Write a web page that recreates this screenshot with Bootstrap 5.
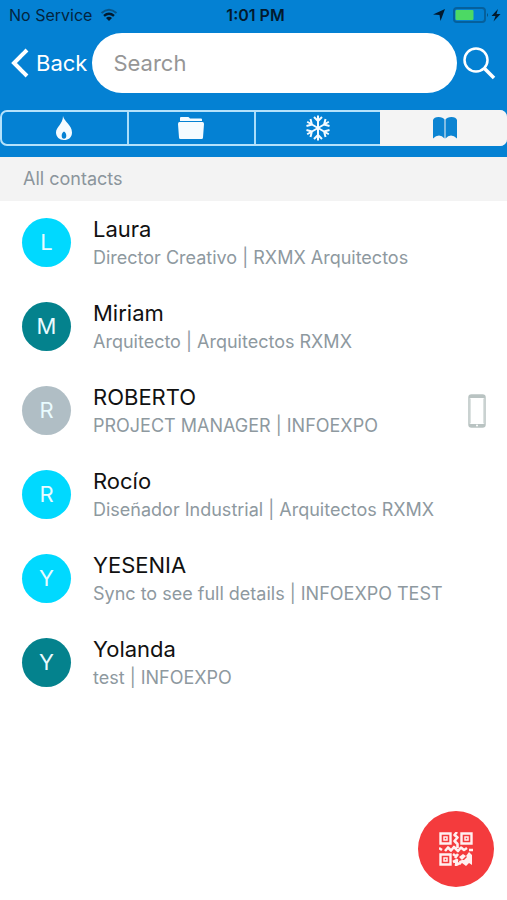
<!DOCTYPE html>
<html lang="en">
<head>
<meta charset="utf-8">
<meta name="viewport" content="width=device-width, initial-scale=1">
<title>Contacts</title>
<link href="https://cdn.jsdelivr.net/npm/bootstrap@5.3.0/dist/css/bootstrap.min.css" rel="stylesheet">
<style>
body { font-family: Inter, "Liberation Sans", sans-serif; background: #fff; }
svg { display: block; flex: none; }
.app-top { background: #0481d3; padding-bottom: 11px; }
.status { height: 30px; padding: 0 5px 0 9px; color: #03253f; font-size: 16px; line-height: 30px; }
.status-time { color: #021a2e; font-weight: 600; }
.nav-line { padding: 3px 11px 0; gap: 5px; }
.back-link { color: #fff; font-size: 22px; gap: 7px; }
.search-box, .search-box:focus { height: 60px; border: 0; border-radius: 30px; padding: 0 21px; font-size: 22px; color: #333; background: #fff; }
.search-box::placeholder { color: #969696; opacity: 1; }
.segments { margin-top: 17px; height: 36px; border: 2px solid #b5e2fb; border-radius: 7px; }
.segment { border: 0; border-radius: 0; padding: 0; color: #f4fbff; background: transparent; }
.segment + .segment { border-left: 2px solid #a9ddfa; }
.segment.chosen { background: #f4f4f4; color: #0c84d2; border-color: #f4f4f4; margin: -2px -2px -2px 0; border-radius: 0 7px 7px 0; }
.section-title { background: #f3f3f3; color: #8b959c; font-size: 18px; line-height: 44px; padding: 0 23px; font-weight: 400; }
.contact { padding: 17px 21px 18px 22px; gap: 22px; }
.avatar { width: 49px; height: 49px; color: #e9fbff; font-size: 22px; }
.cyan { background: #00d9ff; }
.teal { background: #04828d; }
.gray { background: #b0bec5; }
.contact-name { color: #111; font-size: 22px; line-height: 28px; }
.contact-role { color: #8e999f; font-size: 18px; line-height: 30px; }
.contact-text { margin: -3px 0 -6px; }
.scan { width: 76px; height: 76px; right: 13px; bottom: 13px; background: #f43b3d; border: 0; color: #fff0f0; }
</style>
</head>
<body>
<header class="app-top">
  <div class="status d-flex align-items-center">
    <div class="col d-flex align-items-center gap-2">
      <span>No Service</span>
      <svg width="18" height="14" viewBox="0 0 18 14" fill="none" stroke="#021a2e" aria-hidden="true"><path d="M1.500 5Q9-1.500 16.500 5" stroke="#075487" stroke-width="2"/><path d="M4 7.800Q9 3.500 14 7.800" stroke-width="2.400"/><path d="M6 10Q9 7.500 12 10L9 13Z" fill="#021a2e" stroke="none"/></svg>
    </div>
    <span class="status-time">1:01 PM</span>
    <div class="col d-flex align-items-center justify-content-end">
      <svg width="69" height="18" viewBox="0 0 69 18" role="img" aria-label="Location on, battery charging"><path d="M0 8.500 12 3 7.500 15 6.500 9Z" fill="#021a2e"/><rect x="21" y="2" width="31" height="14" rx="3" fill="none" stroke="#06609c" stroke-width="2"/><rect x="22.500" y="4" width="18" height="10" rx="1" fill="#4cd964"/><path d="M54 7q2 2 0 4Z" fill="#06507f"/><path d="M65 3 58.500 10H62.500L60.500 15.500 67.500 8H63.500Z" fill="#021a2e"/></svg>
    </div>
  </div>
  <div class="nav-line d-flex align-items-center">
    <a href="#" class="back-link d-flex align-items-center text-decoration-none">
      <svg width="18" height="30" viewBox="0 0 18 30" fill="none" stroke="currentColor" stroke-width="4" aria-hidden="true"><path d="M16 2 3 15 16 28"/></svg>
      <span>Back</span>
    </a>
    <input type="search" class="search-box form-control shadow-none" placeholder="Search" aria-label="Search contacts">
    <button type="button" class="btn p-0 border-0 text-white" aria-label="Search">
      <svg width="34" height="34" viewBox="0 0 34 34" fill="none" stroke="currentColor" aria-hidden="true"><circle cx="14" cy="14" r="11.500" stroke-width="2.500"/><path d="M22 22 32 32" stroke-width="3.500"/></svg>
    </button>
  </div>
  <div class="segments d-flex" role="group" aria-label="Contact filter">
    <button type="button" class="segment btn col d-flex align-items-center justify-content-center" aria-label="Hot">
      <svg width="16" height="24" viewBox="0 0 16 24" fill="currentColor" aria-hidden="true"><path fill-rule="evenodd" d="M7 0C8 5.500 16 9 16 16.500 16 21.500 12.500 24 8 24S0 21 0 16.500C0 11 7 8 7 0ZM8 15.500C6.500 16.500 5.700 18 5.700 19.800S6.500 22.800 8 22.800 10.300 21.600 10.300 19.800 9.500 16.500 8 15.500Z"/></svg>
    </button>
    <button type="button" class="segment btn col d-flex align-items-center justify-content-center" aria-label="Folder">
      <svg width="26" height="24" viewBox="0 0 26 24" fill="currentColor" aria-hidden="true"><path d="M2 5V2Q2 1 3 1H10Q11 1 11.500 2L12 2.500H23Q24 2.500 24 3.500V5Z"/><path d="M0 8Q0 6 1.500 6H24.500Q26 6 26 8L25 21.500Q25 23 23.500 23H2.500Q1 23 1 21.500Z"/></svg>
    </button>
    <button type="button" class="segment btn col d-flex align-items-center justify-content-center" aria-label="Cold">
      <svg width="24" height="26" viewBox="-12 -13 24 26" fill="none" stroke="currentColor" stroke-width="2" aria-hidden="true"><g id="arm"><path d="M0-12.500V12.500M-4-11 0-7 4-11M-4 11 0 7 4 11"/></g><use href="#arm" transform="rotate(60)"/><use href="#arm" transform="rotate(120)"/></svg>
    </button>
    <button type="button" class="segment chosen btn col d-flex align-items-center justify-content-center" aria-label="All contacts" aria-pressed="true">
      <svg width="24" height="22" viewBox="0 0 24 22" fill="currentColor" aria-hidden="true"><path d="M0 3Q1 0 5.500 0T11.500 2.500V21.500Q9 18.500 6 18.500T0 21.500ZM12.500 2.500Q14 0 18.500 0T24 3V21.500Q21 18.500 18 18.500T12.500 21.500Z"/></svg>
    </button>
  </div>
</header>
<main>
  <h1 class="section-title m-0">All contacts</h1>
  <ul class="list-unstyled m-0">
    <li class="contact d-flex align-items-center">
      <span class="avatar cyan rounded-circle d-flex align-items-center justify-content-center flex-shrink-0" aria-hidden="true">L</span>
      <div class="contact-text flex-grow-1"><div class="contact-name">Laura</div><div class="contact-role">Director Creativo | RXMX Arquitectos</div></div>
    </li>
    <li class="contact d-flex align-items-center">
      <span class="avatar teal rounded-circle d-flex align-items-center justify-content-center flex-shrink-0" aria-hidden="true">M</span>
      <div class="contact-text flex-grow-1"><div class="contact-name">Miriam</div><div class="contact-role">Arquitecto | Arquitectos RXMX</div></div>
    </li>
    <li class="contact d-flex align-items-center">
      <span class="avatar gray rounded-circle d-flex align-items-center justify-content-center flex-shrink-0" aria-hidden="true">R</span>
      <div class="contact-text flex-grow-1"><div class="contact-name">ROBERTO</div><div class="contact-role">PROJECT MANAGER | INFOEXPO</div></div>
      <svg width="18" height="34" viewBox="0 0 18 34" role="img" aria-label="Stored on this phone"><rect x="1" y="1" width="16" height="32" rx="2.500" fill="#fff" stroke="#b9c3c2" stroke-width="1.500"/><path d="M1 4V3Q1 1 3 1H15Q17 1 17 3V4ZM1 30H17V31Q17 33 15 33H3Q1 33 1 31Z" fill="#b9c3c2"/><path d="M2.500 4.500V29.500M15.500 4.500V29.500" stroke="#dce2e1"/><circle cx="9" cy="31.500" r="1" fill="#fff"/></svg>
    </li>
    <li class="contact d-flex align-items-center">
      <span class="avatar cyan rounded-circle d-flex align-items-center justify-content-center flex-shrink-0" aria-hidden="true">R</span>
      <div class="contact-text flex-grow-1"><div class="contact-name">Rocío</div><div class="contact-role">Diseñador Industrial | Arquitectos RXMX</div></div>
    </li>
    <li class="contact d-flex align-items-center">
      <span class="avatar cyan rounded-circle d-flex align-items-center justify-content-center flex-shrink-0" aria-hidden="true">Y</span>
      <div class="contact-text flex-grow-1"><div class="contact-name">YESENIA</div><div class="contact-role">Sync to see full details | INFOEXPO TEST</div></div>
    </li>
    <li class="contact d-flex align-items-center">
      <span class="avatar teal rounded-circle d-flex align-items-center justify-content-center flex-shrink-0" aria-hidden="true">Y</span>
      <div class="contact-text flex-grow-1"><div class="contact-name">Yolanda</div><div class="contact-role">test | INFOEXPO</div></div>
    </li>
  </ul>
</main>
<button type="button" class="scan position-fixed rounded-circle d-flex align-items-center justify-content-center p-0" aria-label="Scan QR code">
  <svg width="34" height="34" viewBox="0 0 34 34" fill="none" stroke="currentColor" aria-hidden="true"><path stroke-width="2.400" d="M1.500 1.500H11.500V11.500H1.500ZM22.500 1.500H32.500V11.500H22.500ZM1.500 22.500H11.500V32.500H1.500Z"/><path stroke-width="1.500" d="M5 5H8V8H5ZM26 5H29V8H26ZM5 26H8V29H5Z"/><path stroke-width="2.600" stroke-linejoin="round" d="M18 0 15.500 3 18.500 5.500 15.500 9 18.500 12V16M0 16 3 18M6 19 9 15.500 12 18.500 15 15 19 19 22 15.500 25 18 28 16M30 18H34M14 22 18 25M19 22 16 26M14 30 18 28 17 33 21 31"/><path fill="currentColor" stroke="none" d="M20 25 24 22 27 24 30 20 33 23V33L30 31 27 34 23 31 21 33 20 29 23 28ZM25 28 28 25 27 24 23 28Z" fill-rule="evenodd"/></svg>
</button>
<script src="https://cdn.jsdelivr.net/npm/bootstrap@5.3.0/dist/js/bootstrap.bundle.min.js"></script>
</body>
</html>
